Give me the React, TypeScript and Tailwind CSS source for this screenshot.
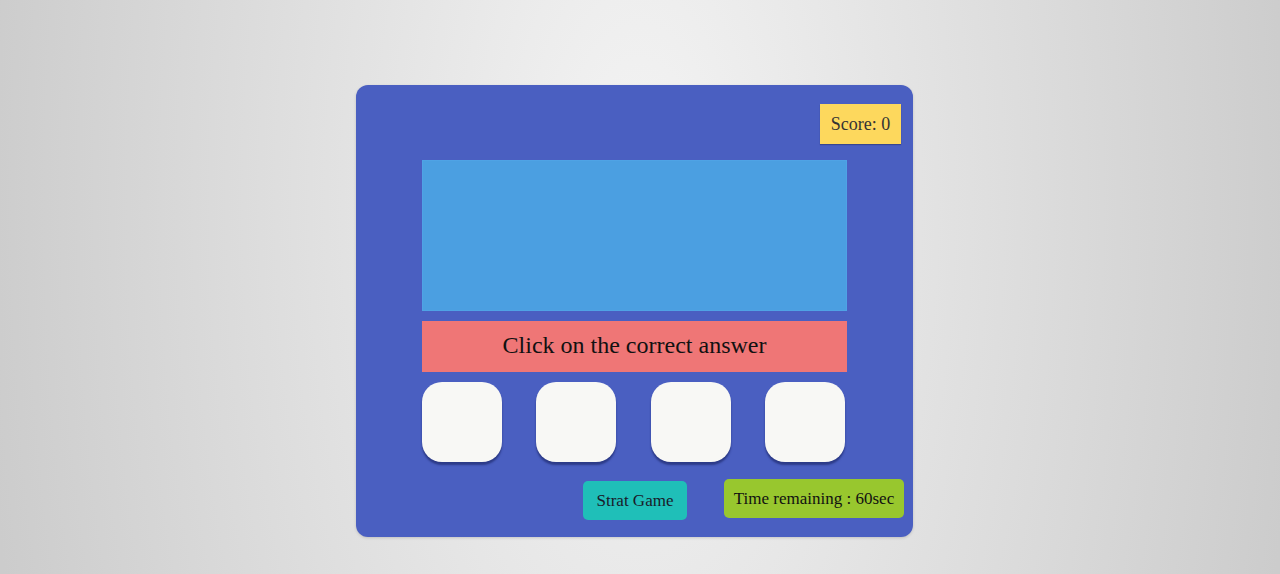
import React from "react";

export default function App() {
  const serif = { fontFamily: '"Liberation Serif", "Times New Roman", serif' };
  return (
    <div
      className="w-full h-[574px] overflow-hidden bg-[radial-gradient(ellipse_660px_1400px_at_50%_35%,#f4f4f4_0%,#cccccc_100%)] flex justify-center pt-[85px] pr-[11px]"
      style={serif}
    >
      <div className="w-[557px] h-[452px] bg-[#4a5fc1] rounded-[12px] shadow-[0_1px_3px_rgba(0,0,0,0.15)] flex flex-col">
        <div className="flex justify-end pt-[19px] pr-[12px]">
          <div className="w-[81px] h-[40px] bg-[#fdd85d] text-[#333] text-[18px] flex items-center justify-center shadow-[0_1px_1px_rgba(0,0,0,0.25)]">
            Score: 0
          </div>
        </div>
        <div className="ml-[66px] w-[425px] flex flex-col">
          <div className="mt-[16px] h-[151px] bg-[#4b9fe1] border border-[#4fa3e5]" />
          <div className="mt-[10px] h-[51px] bg-[#ef7676] flex items-center justify-center text-[24px] text-[#111] pb-[3px]">
            Click on the correct answer
          </div>
          <div className="mt-[10px] flex gap-[34.4px]">
            {[0, 1, 2, 3].map((i) => (
              <div
                key={i}
                className="w-[80px] h-[80px] rounded-[20px] bg-[#f8f8f5] shadow-[0_3px_2px_rgba(20,30,90,0.55)]"
              />
            ))}
          </div>
        </div>
        <div className="mt-[17px] flex items-start pl-[227px]">
          <div className="mt-[2px] w-[104px] h-[39px] rounded-[5px] bg-[#1fbfb8] text-[17px] text-[#1a1a2a] flex items-center justify-center">
            Strat Game
          </div>
          <div className="ml-[37px] w-[180px] h-[39px] rounded-[5px] bg-[#98c72e] text-[17px] text-[#111] flex items-center justify-center">
            Time remaining : 60sec
          </div>
        </div>
      </div>
    </div>
  );
}
